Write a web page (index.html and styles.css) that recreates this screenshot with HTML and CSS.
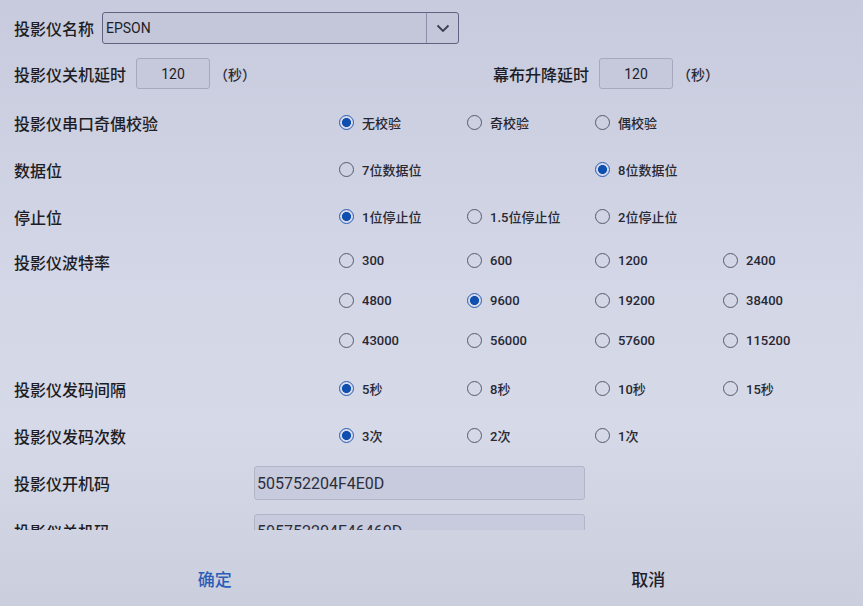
FILE: index.html
```html
<!DOCTYPE html>
<html lang="zh-CN">
<head>
  <meta charset="UTF-8" />
  <meta name="viewport" content="width=device-width, initial-scale=1.0"/>
  <title>投影仪设置</title>
  <link rel="stylesheet" href="styles.css">
</head>
<body>
  <div class="dialog">
    <main class="form-scroll">
      <!-- Name -->
      <div class="row name-row">
        <span class="label">投影仪名称</span>
        <div class="select">
          <span class="select-value">EPSON</span>
          <span class="select-arrow">
            <svg width="14" height="9" viewBox="0 0 14 9"><path d="M1.5 1.5 L7 7 L12.5 1.5" fill="none" stroke="#3a3d4c" stroke-width="1.8"/></svg>
          </span>
        </div>
      </div>

      <!-- Delays -->
      <div class="row delay-row">
        <div class="delay-group">
          <span class="label">投影仪关机延时</span>
          <input class="num-input" type="text" value="120" />
          <span class="unit">（秒）</span>
        </div>
        <div class="delay-group">
          <span class="label">幕布升降延时</span>
          <input class="num-input" type="text" value="120" />
          <span class="unit">（秒）</span>
        </div>
      </div>

      <!-- Parity -->
      <div class="row option-row">
        <span class="label">投影仪串口奇偶校验</span>
        <div class="options">
          <label class="radio"><input type="radio" name="parity" checked /> 无校验</label>
          <label class="radio"><input type="radio" name="parity" /> 奇校验</label>
          <label class="radio"><input type="radio" name="parity" /> 偶校验</label>
        </div>
      </div>

      <!-- Data bits -->
      <div class="row option-row">
        <span class="label">数据位</span>
        <div class="options">
          <label class="radio"><input type="radio" name="databits" /> 7位数据位</label>
          <span></span>
          <label class="radio"><input type="radio" name="databits" checked /> 8位数据位</label>
        </div>
      </div>

      <!-- Stop bits -->
      <div class="row option-row">
        <span class="label">停止位</span>
        <div class="options">
          <label class="radio"><input type="radio" name="stopbits" checked /> 1位停止位</label>
          <label class="radio"><input type="radio" name="stopbits" /> 1.5位停止位</label>
          <label class="radio"><input type="radio" name="stopbits" /> 2位停止位</label>
        </div>
      </div>

      <!-- Baud rate -->
      <div class="row baud-row">
        <span class="label baud-label">投影仪波特率</span>
        <div class="options baud-options">
          <label class="radio"><input type="radio" name="baud" /> 300</label>
          <label class="radio"><input type="radio" name="baud" /> 600</label>
          <label class="radio"><input type="radio" name="baud" /> 1200</label>
          <label class="radio"><input type="radio" name="baud" /> 2400</label>
          <label class="radio"><input type="radio" name="baud" /> 4800</label>
          <label class="radio"><input type="radio" name="baud" checked /> 9600</label>
          <label class="radio"><input type="radio" name="baud" /> 19200</label>
          <label class="radio"><input type="radio" name="baud" /> 38400</label>
          <label class="radio"><input type="radio" name="baud" /> 43000</label>
          <label class="radio"><input type="radio" name="baud" /> 56000</label>
          <label class="radio"><input type="radio" name="baud" /> 57600</label>
          <label class="radio"><input type="radio" name="baud" /> 115200</label>
        </div>
      </div>

      <!-- Send interval -->
      <div class="row option-row interval-row">
        <span class="label">投影仪发码间隔</span>
        <div class="options">
          <label class="radio"><input type="radio" name="interval" checked /> 5秒</label>
          <label class="radio"><input type="radio" name="interval" /> 8秒</label>
          <label class="radio"><input type="radio" name="interval" /> 10秒</label>
          <label class="radio"><input type="radio" name="interval" /> 15秒</label>
        </div>
      </div>

      <!-- Send count -->
      <div class="row option-row">
        <span class="label">投影仪发码次数</span>
        <div class="options">
          <label class="radio"><input type="radio" name="count" checked /> 3次</label>
          <label class="radio"><input type="radio" name="count" /> 2次</label>
          <label class="radio"><input type="radio" name="count" /> 1次</label>
        </div>
      </div>

      <!-- Codes -->
      <div class="row code-row">
        <span class="label">投影仪开机码</span>
        <input class="code-input" type="text" value="505752204F4E0D" />
      </div>
      <div class="row code-row">
        <span class="label">投影仪关机码</span>
        <input class="code-input" type="text" value="505752204F46460D" />
      </div>
    </main>

    <footer class="footer">
      <button class="btn btn-ok">确定</button>
      <button class="btn btn-cancel">取消</button>
    </footer>
  </div>
</body>
</html>
```

FILE: styles.css
```css
body {
  margin: 0;
  padding: 0;
  font-family: Roboto, "Noto Sans CJK SC", sans-serif;
  color: #1f2029;
  background: #cfd2e2;
}

.dialog {
  width: 863px;
  height: 606px;
  display: flex;
  flex-direction: column;
  background: linear-gradient(180deg, #c8cbdd 0%, #d3d6e6 45%, #d6d9e7 70%, #cbcfdd 100%);
}

/* the list is scrolled, last row is cut by the footer */
.form-scroll {
  height: 530px;
  overflow: hidden;
  padding: 12px 0 0 14px;
  box-sizing: border-box;
}

.row {
  display: flex;
  align-items: center;
}

.label {
  font-size: 16px;
  font-weight: 500;
  color: #1c1d26;
  white-space: nowrap;
}

/* Name select */
.name-row {
  gap: 8px;
}

.select {
  width: 357px;
  height: 32px;
  box-sizing: border-box;
  border: 1px solid #5f6482;
  border-radius: 3px;
  background: #c4c7da;
  display: flex;
  align-items: center;
}

.select-value {
  flex: 1;
  padding-left: 3px;
  font-size: 14px;
  color: #1d1e28;
}

.select-arrow {
  width: 31px;
  height: 100%;
  border-left: 1px solid #8c90aa;
  display: flex;
  align-items: center;
  justify-content: center;
}

/* Delays */
.delay-row {
  margin-top: 14px;
  gap: 237px;
}

.delay-group {
  display: flex;
  align-items: center;
}

.num-input {
  width: 74px;
  height: 31px;
  box-sizing: border-box;
  margin-left: 10px;
  border: 1px solid #a6a9be;
  border-radius: 3px;
  background: #c6c9dc;
  font-family: inherit;
  font-size: 14px;
  color: #1d1e28;
  text-align: center;
}

.unit {
  margin-left: 4px;
  font-size: 14px;
  font-weight: 500;
  color: #2a2b36;
}

/* Radio option rows */
.option-row {
  height: 47px;
}

.option-row > .label,
.baud-row > .label {
  width: 324px;
}

.options {
  width: 512px;
  display: grid;
  grid-template-columns: repeat(4, 128px);
  align-items: center;
}

.delay-row + .option-row {
  margin-top: 10px;
}

.radio {
  display: flex;
  align-items: center;
  gap: 8px;
  font-size: 13px;
  font-weight: 500;
  color: #272834;
  white-space: nowrap;
}

.radio input {
  appearance: none;
  -webkit-appearance: none;
  margin: 0 0 0 1px;
  width: 15px;
  height: 15px;
  border: 1.5px solid #565a6c;
  border-radius: 50%;
  background: transparent;
  box-sizing: border-box;
}

.radio input:checked {
  border-color: #2a5cb4;
  background: radial-gradient(circle, #0f4fb0 0 4.2px, #d6daea 4.8px 100%);
}

/* Baud rate block */
.baud-row {
  align-items: flex-start;
}

.baud-label {
  line-height: 40px;
  padding-top: 4px;
}

.baud-options {
  grid-auto-rows: 40px;
}

.interval-row {
  margin-top: 5px;
}

/* Code fields */
.code-row {
  height: 48px;
}

.code-row .label {
  width: 240px;
}

.code-input {
  width: 331px;
  height: 34px;
  box-sizing: border-box;
  border: 1px solid #b2b5c8;
  border-radius: 3px;
  background: #c8cbdd;
  padding: 0 2px;
  font-family: inherit;
  font-size: 16px;
  color: #2c2e3c;
}

/* Footer buttons */
.footer {
  flex: 1;
  display: flex;
  padding-top: 20px;
  box-sizing: border-box;
}

.btn {
  flex: 1;
  height: 56px;
  border: none;
  background: transparent;
  font-family: "Noto Sans CJK SC", sans-serif;
  font-size: 17px;
  font-weight: 500;
  cursor: pointer;
}

.btn-ok {
  color: #2c5db8;
  padding-right: 10px;
}

.btn-cancel {
  color: #1f2029;
}
```
